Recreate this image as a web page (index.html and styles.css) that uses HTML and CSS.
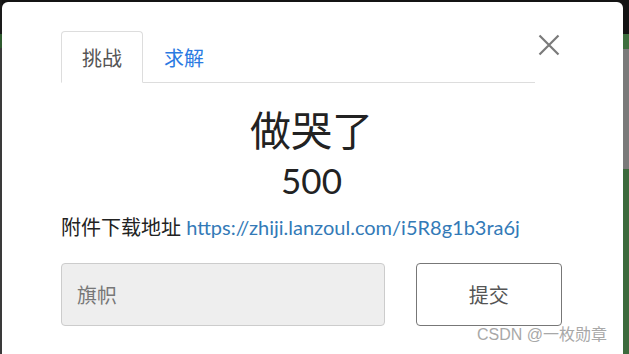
FILE: index.html
```html
<!DOCTYPE html>
<html lang="zh">
<head>
<meta charset="utf-8">
<link rel="stylesheet" href="styles.css">
</head>
<body>
<div class="page">
  <div class="edge-left">
    <div class="el-dark"></div>
    <div class="el-green"></div>
    <div class="el-gray"></div>
  </div>
  <div class="modal">
    <button class="close" aria-label="关闭">
      <svg width="22" height="22" viewBox="0 0 22 22"><path d="M1.5 1.5 L20.5 20.5 M20.5 1.5 L1.5 20.5" stroke="#7a7a7a" stroke-width="2.2" fill="none"/></svg>
    </button>
    <div class="tabs">
      <div class="tab active">挑战</div>
      <div class="tab link">求解</div>
    </div>
    <h1 class="title">做哭了</h1>
    <div class="points">500</div>
    <p class="desc">附件下载地址 <a href="#">https://zhiji.lanzoul.com/i5R8g1b3ra6j</a></p>
    <div class="form">
      <div class="input">旗帜</div>
      <button class="submit">提交</button>
    </div>
    <div class="watermark">CSDN @一枚勋章</div>
  </div>
  <div class="edge-right">
    <div class="er-dark"></div>
    <div class="er-green"></div>
    <div class="er-gray"></div>
    <div class="er-green2"></div>
  </div>
</div>
</body>
</html>
```
FILE: styles.css
```css
html, body {
  margin: 0;
  padding: 0;
  background: #141414;
}
body {
  width: 629px;
  height: 354px;
  overflow: hidden;
  font-family: Lato, "Noto Sans CJK SC", sans-serif;
}
.page {
  display: flex;
  height: 354px;
  padding-top: 2px;
  box-sizing: border-box;
}
.edge-left {
  width: 2px;
  display: flex;
  flex-direction: column;
  margin-top: -2px;
}
.el-dark { height: 34px; background: #1a1a1a; }
.el-green { height: 14px; background: #2f5a2f; }
.el-gray { flex: 1; background: #3a3a3a; }
.edge-right {
  width: 6px;
  display: flex;
  flex-direction: column;
  margin-top: -2px;
}
.er-dark { height: 34px; background: #141414; }
.er-green { height: 15px; background: #3e6e3e; }
.er-gray { height: 120px; background: #7a7a7a; }
.er-green2 { flex: 1; background: #3c6a3c; }
.modal {
  position: relative;
  width: 621px;
  background: #fff;
  border-radius: 6px 6px 0 0;
  padding: 29px 61px 0 59px;
  box-sizing: border-box;
}
.close {
  position: absolute;
  left: 536px;
  top: 32px;
  width: 22px;
  height: 22px;
  padding: 0;
  border: 0;
  background: none;
  display: block;
}
.close svg { display: block; }
.tabs {
  display: flex;
  border-bottom: 1px solid #dddddd;
  margin-right: 27px;
  height: 51px;
}
.tab {
  font-family: "Noto Sans CJK SC", sans-serif;
  font-size: 20px;
  line-height: 50px;
  padding: 2px 20px 0;
  box-sizing: border-box;
  height: 52px;
}
.tab.active {
  width: 82px;
  border: 1px solid #dddddd;
  border-bottom-color: #fff;
  border-radius: 4px 4px 0 0;
  color: #555;
  background: #fff;
  text-align: center;
  padding: 1px 0 0;
}
.tab.link {
  color: #2a7ae2;
  padding: 2px 21px 0;
}
.title {
  margin: 17px 0 0;
  text-align: center;
  font-family: "Noto Sans CJK SC", sans-serif;
  font-weight: 400;
  font-size: 41px;
  line-height: 56px;
  color: #222;
}
.points {
  text-align: center;
  font-size: 35px;
  line-height: 40px;
  margin-top: 4px;
  color: #222;
}
.desc {
  margin: 13px 0 0;
  font-size: 20px;
  line-height: 28px;
  color: #222;
}
.desc a {
  color: #337ab7;
  text-decoration: none;
}
.form {
  display: flex;
  gap: 31px;
  margin-top: 22px;
}
.input {
  width: 325px;
  height: 63px;
  box-sizing: border-box;
  background: #eeeeee;
  border: 1px solid #cccccc;
  border-radius: 4px;
  padding-left: 15px;
  font-family: "Noto Sans CJK SC", sans-serif;
  font-size: 20px;
  line-height: 61px;
  color: #777;
}
.submit {
  width: 147px;
  height: 63px;
  box-sizing: border-box;
  background: #fff;
  border: 1px solid #777;
  border-radius: 4px;
  font-family: "Noto Sans CJK SC", sans-serif;
  font-size: 20px;
  color: #555;
  padding: 0;
}
.watermark {
  position: absolute;
  left: 475px;
  top: 323px;
  font-family: "Liberation Sans", "Noto Sans CJK SC", sans-serif;
  font-size: 16px;
  line-height: 20px;
  color: #a8a8a8;
}
```
